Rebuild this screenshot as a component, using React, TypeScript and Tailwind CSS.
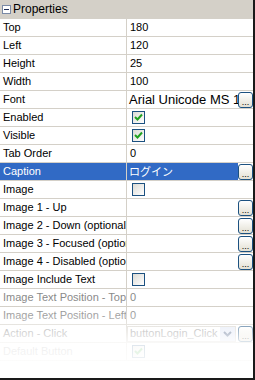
import React from 'react';

type Row = {
  label: string;
  value?: string;
  kind?: 'text' | 'check' | 'uncheck' | 'dots' | 'combo' | 'textdots';
  selected?: boolean;
  muted?: boolean;
};

const rows: Row[] = [
  { label: 'Top', value: '180' },
  { label: 'Left', value: '120' },
  { label: 'Height', value: '25' },
  { label: 'Width', value: '100' },
  { label: 'Font', value: 'Arial Unicode MS 14', kind: 'textdots' },
  { label: 'Enabled', kind: 'check' },
  { label: 'Visible', kind: 'check' },
  { label: 'Tab Order', value: '0' },
  { label: 'Caption', value: 'ログイン', kind: 'textdots', selected: true },
  { label: 'Image', kind: 'uncheck' },
  { label: 'Image 1 - Up', kind: 'dots' },
  { label: 'Image 2 - Down (optional)', kind: 'dots' },
  { label: 'Image 3 - Focused (optional)', kind: 'dots' },
  { label: 'Image 4 - Disabled (optional)', kind: 'dots' },
  { label: 'Image Include Text', kind: 'uncheck' },
  { label: 'Image Text Position - Top', value: '0', muted: true },
  { label: 'Image Text Position - Left', value: '0', muted: true },
  { label: 'Action - Click', value: 'buttonLogin_Click', kind: 'combo', muted: true },
  { label: 'Default Button', kind: 'check', muted: true },
];

const DotsButton = () => (
  <div className="w-[15px] h-[16px] shrink-0 rounded-[3px] border border-[#1c5180] bg-gradient-to-b from-white to-[#e3e0d3] flex items-end justify-center pb-[2px]">
    <span className="text-[9px] leading-[6px] text-black tracking-[0px]">...</span>
  </div>
);

const Checkbox = ({ checked }: { checked: boolean }) => (
  <div className="w-[13px] h-[13px] border border-[#1c5180] bg-gradient-to-br from-[#dcdbd5] to-white flex items-center justify-center">
    {checked && (
      <svg width="9" height="9" viewBox="0 0 9 9">
        <path d="M1 4 L3.5 6.5 L8 1.5" stroke="#21a121" strokeWidth="2" fill="none" />
      </svg>
    )}
  </div>
);

const PropRow = ({ row }: { row: Row }) => {
  const kind = row.kind ?? 'text';
  const bg = row.selected ? 'bg-[#316ac5] text-white' : 'bg-white';
  const labelColor = row.selected ? 'text-white' : row.muted ? 'text-[#8a8a8a]' : 'text-black';
  const valueColor = row.selected ? 'text-white' : row.muted ? 'text-[#8a8a8a]' : 'text-black';
  return (
    <div className="flex h-[18px] border-b border-[#d4d0c8]">
      <div className={`w-[127px] shrink-0 border-r border-[#d4d0c8] pl-[3px] flex items-center overflow-hidden whitespace-nowrap ${bg} ${labelColor}`}>
        {row.label}
      </div>
      <div className="flex-1 flex items-center min-w-0">
        {(kind === 'check' || kind === 'uncheck') && (
          <div className="pl-[5px] flex items-center h-full">
            <Checkbox checked={kind === 'check'} />
          </div>
        )}
        {kind === 'text' && (
          <div className={`pl-[3px] whitespace-nowrap ${valueColor}`}>{row.value}</div>
        )}
        {kind === 'dots' && (
          <div className="flex-1 flex justify-end items-center h-full">
            <DotsButton />
          </div>
        )}
        {kind === 'textdots' && (
          <>
            <div className={`flex-1 h-full pl-[2px] flex items-center overflow-hidden whitespace-nowrap ${bg} ${valueColor}`}>
              <span className={row.selected ? "font-['Noto_Sans_CJK_JP',sans-serif] text-[11px]" : 'text-[13px]'}>{row.value}</span>
            </div>
            <DotsButton />
          </>
        )}
        {kind === 'combo' && (
          <>
            <div className="flex-1 h-[16px] border border-[#d4d0c8] flex items-center overflow-hidden">
              <span className="flex-1 pl-[2px] whitespace-nowrap text-[#8a8a8a] overflow-hidden">{row.value}</span>
              <div className="w-[15px] h-full bg-[#dfe6f5] flex items-center justify-center">
                <svg width="9" height="6" viewBox="0 0 9 6">
                  <path d="M1 1 L4.5 4.5 L8 1" stroke="#4d6185" strokeWidth="2" fill="none" />
                </svg>
              </div>
            </div>
            <div className="ml-[2px]"><DotsButton /></div>
          </>
        )}
      </div>
    </div>
  );
};

export default function App() {
  return (
    <div className="w-[255px] h-[380px] bg-white border-r-2 border-b-2 border-[#1a1a1a] overflow-hidden relative font-['Liberation_Sans',Arial,sans-serif] text-[11px] leading-none">
      <div className="h-[19px] bg-[#d4d0c8] flex items-center pl-[2px] border-b border-[#d4d0c8]">
        <div className="w-[9px] h-[9px] border border-[#7a8aa6] bg-white flex items-center justify-center mr-[2px]">
          <div className="w-[5px] h-[1px] bg-[#1f2f58]" />
        </div>
        <span className="text-black text-[12px]">Properties</span>
      </div>
      {rows.map((r) => (
        <PropRow key={r.label} row={r} />
      ))}
      <div className="absolute left-0 right-0 top-[306px] bottom-0 bg-gradient-to-b from-white/0 via-white/85 to-white pointer-events-none" />
    </div>
  );
}
